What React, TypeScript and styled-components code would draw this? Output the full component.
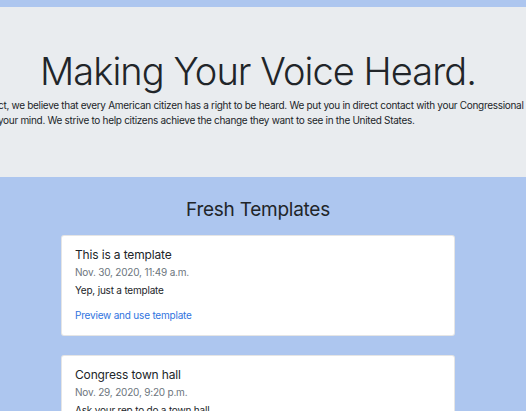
import React from "react";
import styled, { createGlobalStyle } from "styled-components";

const GlobalStyle = createGlobalStyle`
  html, body {
    margin: 0;
    padding: 0;
    background: #adc6ef;
    overflow: hidden;
  }
  body {
    font-family: Inter, "Noto Sans", "Liberation Sans", sans-serif;
    color: #212529;
  }
`;

const Page = styled.div`
  width: calc(100% - 10px);
  padding-top: 7px;
  display: flex;
  flex-direction: column;
  align-items: center;
`;

const Jumbotron = styled.header`
  width: calc(100% + 10px);
  margin-right: -10px;
  box-sizing: border-box;
  height: 170px;
  padding-top: 41px;
  background: #e9ecef;
  display: flex;
  flex-direction: column;
  overflow: hidden;
`;

const Title = styled.h1`
  margin: 0;
  width: calc(100% - 10px);
  text-align: center;
  font-size: 38px;
  line-height: 46px;
  font-weight: 350;
  color: #212529;
  letter-spacing: -0.95px;
`;

const Lead = styled.p`
  margin: 4px 0 0 -2px;
  font-size: 10px;
  line-height: 15px;
  letter-spacing: -0.3px;
  white-space: nowrap;
  color: #212529;
`;

const SectionTitle = styled.h2`
  margin: 21px 0 0;
  font-size: 19px;
  line-height: 23px;
  font-weight: 400;
  letter-spacing: -0.25px;
  color: #212529;
`;

const CardList = styled.div`
  margin-top: 14px;
  width: 394px;
  display: flex;
  flex-direction: column;
  gap: 19px;
`;

const Card = styled.article`
  background: #ffffff;
  border: 1px solid rgba(0, 0, 0, 0.1);
  border-radius: 3px;
  padding: 11px 13px 12px;
  display: flex;
  flex-direction: column;
`;

const CardTitle = styled.h5`
  margin: 0;
  font-size: 12px;
  line-height: 16px;
  font-weight: 400;
  letter-spacing: -0.15px;
  color: #212529;
`;

const CardDate = styled.h6`
  margin: 2px 0 0;
  font-size: 10px;
  line-height: 14px;
  font-weight: 400;
  letter-spacing: -0.2px;
  color: #6c757d;
`;

const CardText = styled.p`
  margin: 3px 0 0;
  font-size: 10px;
  line-height: 16px;
  letter-spacing: -0.2px;
  color: #212529;
`;

const CardLink = styled.a`
  margin-top: 9px;
  font-size: 10px;
  line-height: 16px;
  letter-spacing: -0.2px;
  color: #2f74e0;
  text-decoration: none;
`;

const templates = [
  { title: "This is a template", date: "Nov. 30, 2020, 11:49 a.m.", body: "Yep, just a template" },
  { title: "Congress town hall", date: "Nov. 29, 2020, 9:20 p.m.", body: "Ask your rep to do a town hall" },
];

export default function App() {
  return (
    <>
      <GlobalStyle />
      <Page>
        <Jumbotron>
          <Title>Making Your Voice Heard.</Title>
          <Lead>
            ct, we believe that every American citizen has a right to be heard. We put you in direct contact with your Congressional
            <br />
            your mind. We strive to help citizens achieve the change they want to see in the United States.
          </Lead>
        </Jumbotron>
        <SectionTitle>Fresh Templates</SectionTitle>
        <CardList>
          {templates.map((t) => (
            <Card key={t.title}>
              <CardTitle>{t.title}</CardTitle>
              <CardDate>{t.date}</CardDate>
              <CardText>{t.body}</CardText>
              <CardLink href="#">Preview and use template</CardLink>
            </Card>
          ))}
        </CardList>
      </Page>
    </>
  );
}
